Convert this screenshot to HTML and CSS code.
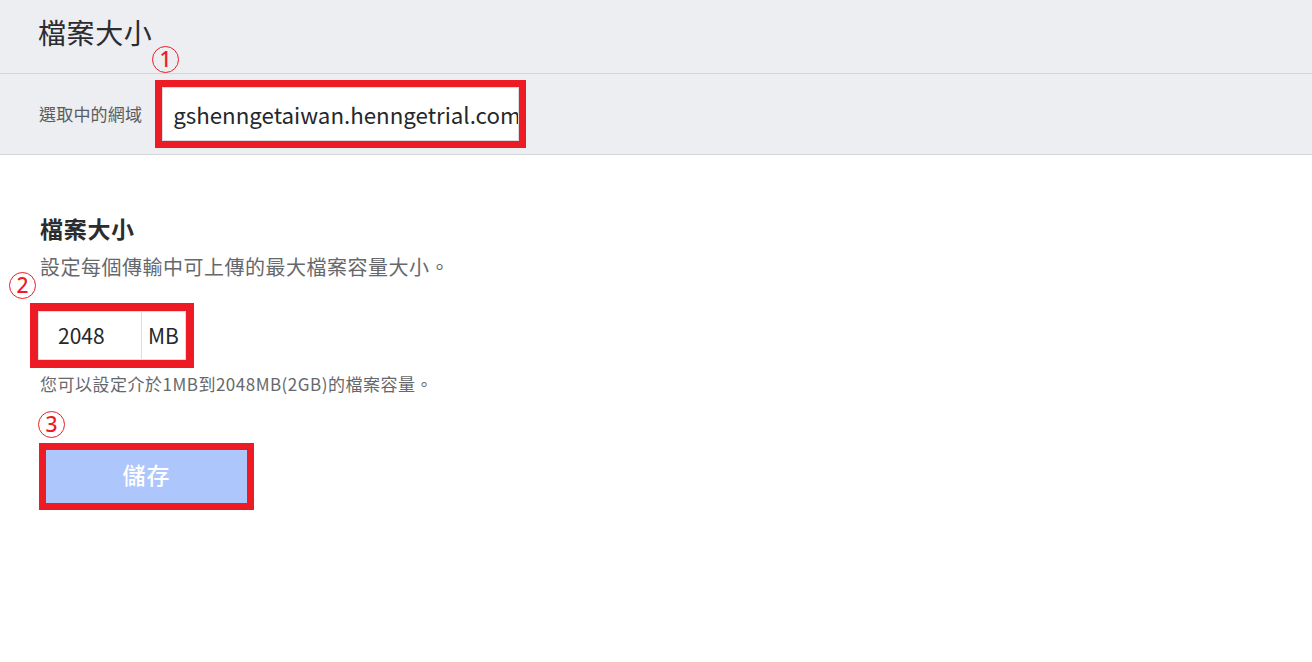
FILE: index.html
```html
<!DOCTYPE html>
<html lang="zh-Hant">
<head>
<meta charset="utf-8">
<title>檔案大小</title>
<link rel="stylesheet" href="styles.css">
</head>
<body>
<header class="page-header">
  <h1 class="page-title">檔案大小</h1>
</header>
<div class="domain-bar">
  <span class="domain-label">選取中的網域</span>
  <div class="domain-select">gshenngetaiwan.henngetrial.com</div>
</div>
<main class="content">
  <h2 class="section-title">檔案大小</h2>
  <p class="section-desc">設定每個傳輸中可上傳的最大檔案容量大小。</p>
  <div class="size-group">
    <div class="size-input">2048</div>
    <div class="size-unit">MB</div>
  </div>
  <p class="hint">您可以設定介於1MB到2048MB(2GB)的檔案容量。</p>
  <button class="save-btn" type="button">儲存</button>
</main>
<span class="mark mark-1">1</span>
<span class="mark mark-2">2</span>
<span class="mark mark-3">3</span>
</body>
</html>
```
FILE: styles.css
```css
* { box-sizing: border-box; }
html, body { margin: 0; padding: 0; }
body {
  background: #ffffff;
  font-family: "Noto Sans CJK TC", "Noto Sans", sans-serif;
  color: #2a2c30;
  position: relative;
  width: 1312px;
  height: 662px;
  overflow: hidden;
}
.page-header {
  height: 74px;
  background: #eceef2;
  border-bottom: 1px solid #d3d5d9;
  display: flex;
  align-items: center;
  padding: 0 38px 10px;
}
.page-title {
  margin: 0;
  font-size: 28px;
  font-weight: 400;
  line-height: 36px;
  letter-spacing: 0.6px;
  color: #2a2c30;
}
.domain-bar {
  height: 81px;
  background: #eceef2;
  border-bottom: 1px solid #d3d5d9;
  display: flex;
  align-items: center;
  padding: 0 39px;
}
.domain-label {
  font-size: 17px;
  color: #5a5c60;
  margin-right: 20px;
  line-height: 24px;
  letter-spacing: 0.2px;
}
.domain-select {
  width: 357px;
  height: 54px;
  background: #fff;
  border: 1px solid #dadce0;
  outline: 7px solid #ed1c24;
  font-size: 22.3px;
  line-height: 52px;
  padding-left: 10px;
  white-space: nowrap;
  overflow: hidden;
  color: #25272b;
}
.content {
  padding: 57px 40px 0;
}
.section-title {
  margin: 0;
  font-size: 23px;
  font-weight: 700;
  line-height: 32px;
  letter-spacing: 0.7px;
  color: #2a2c30;
}
.section-desc {
  margin: 9px 0 0;
  font-size: 20px;
  line-height: 28px;
  letter-spacing: 0.5px;
  color: #66686c;
}
.size-group {
  margin: 30px 0 0 -2px;
  display: inline-flex;
  height: 49px;
  border: 1px solid #dcdde0;
  outline: 8px solid #ed1c24;
  background: #fff;
}
.size-input {
  width: 103px;
  border-right: 1px solid #dcdde0;
  font-size: 21px;
  line-height: 47px;
  padding-left: 19px;
  color: #25272b;
}
.size-unit {
  width: 43px;
  font-size: 21px;
  line-height: 47px;
  padding-left: 6px;
  color: #25272b;
}
.hint {
  margin: 12px 0 0;
  font-size: 17px;
  line-height: 24px;
  letter-spacing: 0.5px;
  color: #66686c;
}
.save-btn {
  display: block;
  margin: 54px 0 0 6px;
  width: 201px;
  height: 53px;
  border: none;
  outline: 7px solid #ed1c24;
  background: #adc6fb;
  color: #fff;
  font-family: "Noto Sans CJK TC", "Noto Sans", sans-serif;
  font-size: 23px;
  font-weight: 500;
  letter-spacing: 1px;
  padding: 0 0 6px;
}
.mark {
  position: absolute;
  width: 27px;
  height: 27px;
  border: 1.5px solid #ed1c24;
  border-radius: 50%;
  color: #ed1c24;
  font-family: "Noto Sans", sans-serif;
  font-size: 21px;
  font-weight: 500;
  line-height: 24px;
  text-align: center;
}
.mark-1 { left: 152px; top: 46px; }
.mark-2 { left: 9px; top: 272px; }
.mark-3 { left: 38px; top: 411px; }
```
